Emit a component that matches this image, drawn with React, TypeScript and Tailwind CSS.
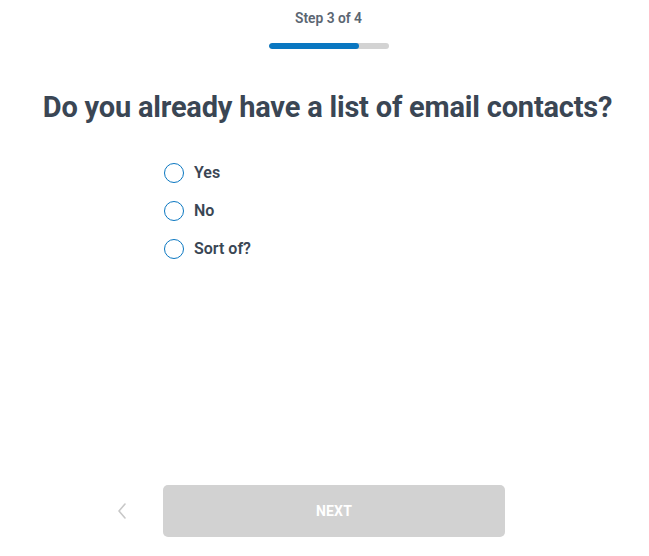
import React from "react";

export default function App() {
  const options = ["Yes", "No", "Sort of?"];
  return (
    <div
      className="w-[649px] h-[556px] bg-white flex flex-col items-center"
      style={{ fontFamily: "Roboto, 'Liberation Sans', sans-serif" }}
    >
      <div className="mt-[10px] text-[13.8px] leading-[17px] font-semibold text-[#5b6672] pl-[8px]">
        Step 3 of 4
      </div>
      <div className="mt-[16px] ml-[8px] w-[120px] h-[6px] rounded-full bg-[#d3d3d3] overflow-hidden">
        <div className="h-full w-[90px] rounded-full bg-[#0a77c1]" />
      </div>
      <h1 className="mt-[41px] text-[29px] leading-[34px] font-bold tracking-[-0.2px] text-[#3a4654] ml-[6px]">
        Do you already have a list of email contacts?
      </h1>
      <div className="mt-[39px] w-full pl-[164px] flex flex-col gap-[18px]">
        {options.map((o) => (
          <label key={o} className="flex items-center gap-[10px] h-[20px]">
            <span className="w-[20px] h-[20px] rounded-full border border-[#0a77c1] bg-white" />
            <span className="text-[16px] font-semibold text-[#3a4654]">{o}</span>
          </label>
        ))}
      </div>
      <div className="mt-auto mb-[19px] w-full flex items-center">
        <div className="w-[163px] flex justify-end pr-[36px]">
          <svg width="10" height="18" viewBox="0 0 10 18" fill="none">
            <path d="M8 2 L2 9 L8 16" stroke="#c8c8c8" strokeWidth="1.6" strokeLinecap="round" strokeLinejoin="round" />
          </svg>
        </div>
        <button className="w-[342px] h-[52px] rounded-[5px] bg-[#d2d2d2] text-white text-[14px] font-bold tracking-[0.2px]">
          NEXT
        </button>
      </div>
    </div>
  );
}
